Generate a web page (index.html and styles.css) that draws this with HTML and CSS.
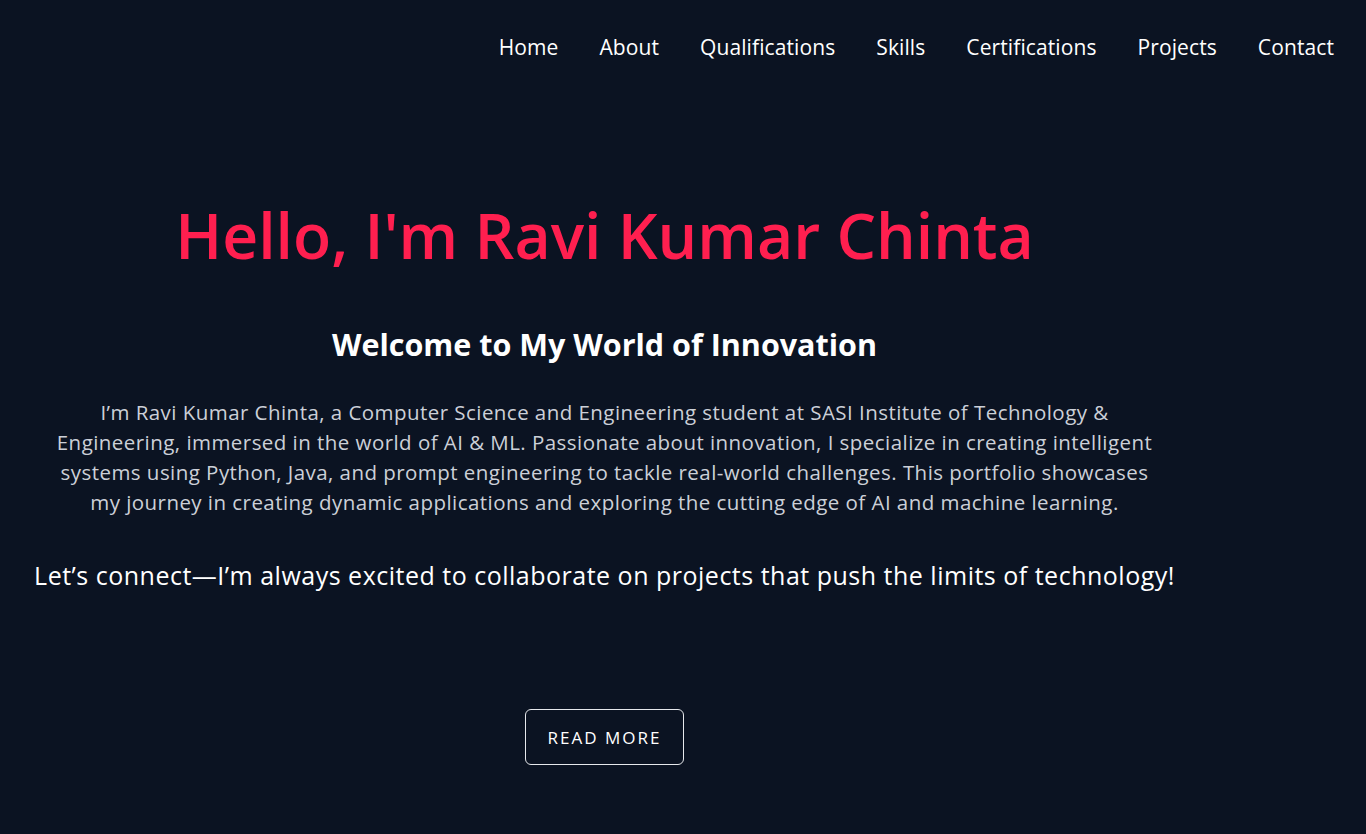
FILE: index.html
```html
<!DOCTYPE html>
<html lang="en">
<head>
<meta charset="utf-8">
<title>Ravi Kumar Chinta</title>
<link rel="stylesheet" href="styles.css">
</head>
<body>
<header class="site-header">
  <nav class="nav">
    <a href="#home">Home</a>
    <a href="#about">About</a>
    <a href="#qualifications">Qualifications</a>
    <a href="#skills">Skills</a>
    <a href="#certifications">Certifications</a>
    <a href="#projects">Projects</a>
    <a href="#contact">Contact</a>
  </nav>
</header>
<main class="hero">
  <div class="hero-content">
    <h1 class="hero-title">Hello, I'm Ravi Kumar Chinta</h1>
    <h2 class="hero-subtitle">Welcome to My World of Innovation</h2>
    <p class="hero-text">I’m Ravi Kumar Chinta, a Computer Science and Engineering student at SASI Institute of Technology &amp; Engineering, immersed in the world of AI &amp; ML. Passionate about innovation, I specialize in creating intelligent systems using Python, Java, and prompt engineering to tackle real-world challenges. This portfolio showcases my journey in creating dynamic applications and exploring the cutting edge of AI and machine learning.</p>
    <p class="hero-connect">Let’s connect—I’m always excited to collaborate on projects that push the limits of technology!</p>
    <a class="btn" href="#about">READ MORE</a>
  </div>
</main>
</body>
</html>
```

FILE: styles.css
```css
* { box-sizing: border-box; }
html, body { margin: 0; padding: 0; }
body {
  background: #0b1322;
  color: #ffffff;
  font-family: "Open Sans", "Noto Sans", sans-serif;
  min-height: 834px;
}
.site-header {
  height: 94px;
  display: flex;
  align-items: center;
  justify-content: flex-end;
  padding: 0 32px;
}
.nav {
  display: flex;
  gap: 41px;
}
.nav a {
  color: #ffffff;
  text-decoration: none;
  font-size: 21px;
  letter-spacing: 0.1px;
  line-height: 28px;
}
.hero-content {
  width: 1209px;
  text-align: center;
  display: flex;
  flex-direction: column;
  align-items: center;
}
.hero-title {
  margin: 102px 0 0;
  font-size: 62.5px;
  line-height: 77px;
  font-weight: 600;
  color: #ff1f4f;
}
.hero-subtitle {
  margin: 53px 0 0;
  font-size: 30.5px;
  line-height: 36px;
  font-weight: 700;
}
.hero-text {
  margin: 35px 0 0;
  max-width: 1112px;
  font-size: 20.5px;
  letter-spacing: 0.45px;
  line-height: 30px;
  color: #ccd0d8;
}
.hero-connect {
  margin: 41px 0 0;
  font-size: 25px;
  letter-spacing: 0.5px;
  line-height: 34px;
  font-weight: 500;
}
.btn {
  margin-top: 117px;
  display: inline-flex;
  align-items: center;
  justify-content: center;
  width: 159px;
  height: 56px;
  border: 1px solid #e6e8ec;
  border-radius: 6px;
  color: #ffffff;
  text-decoration: none;
  font-size: 17px;
  font-weight: 500;
  letter-spacing: 2px;
}
```
